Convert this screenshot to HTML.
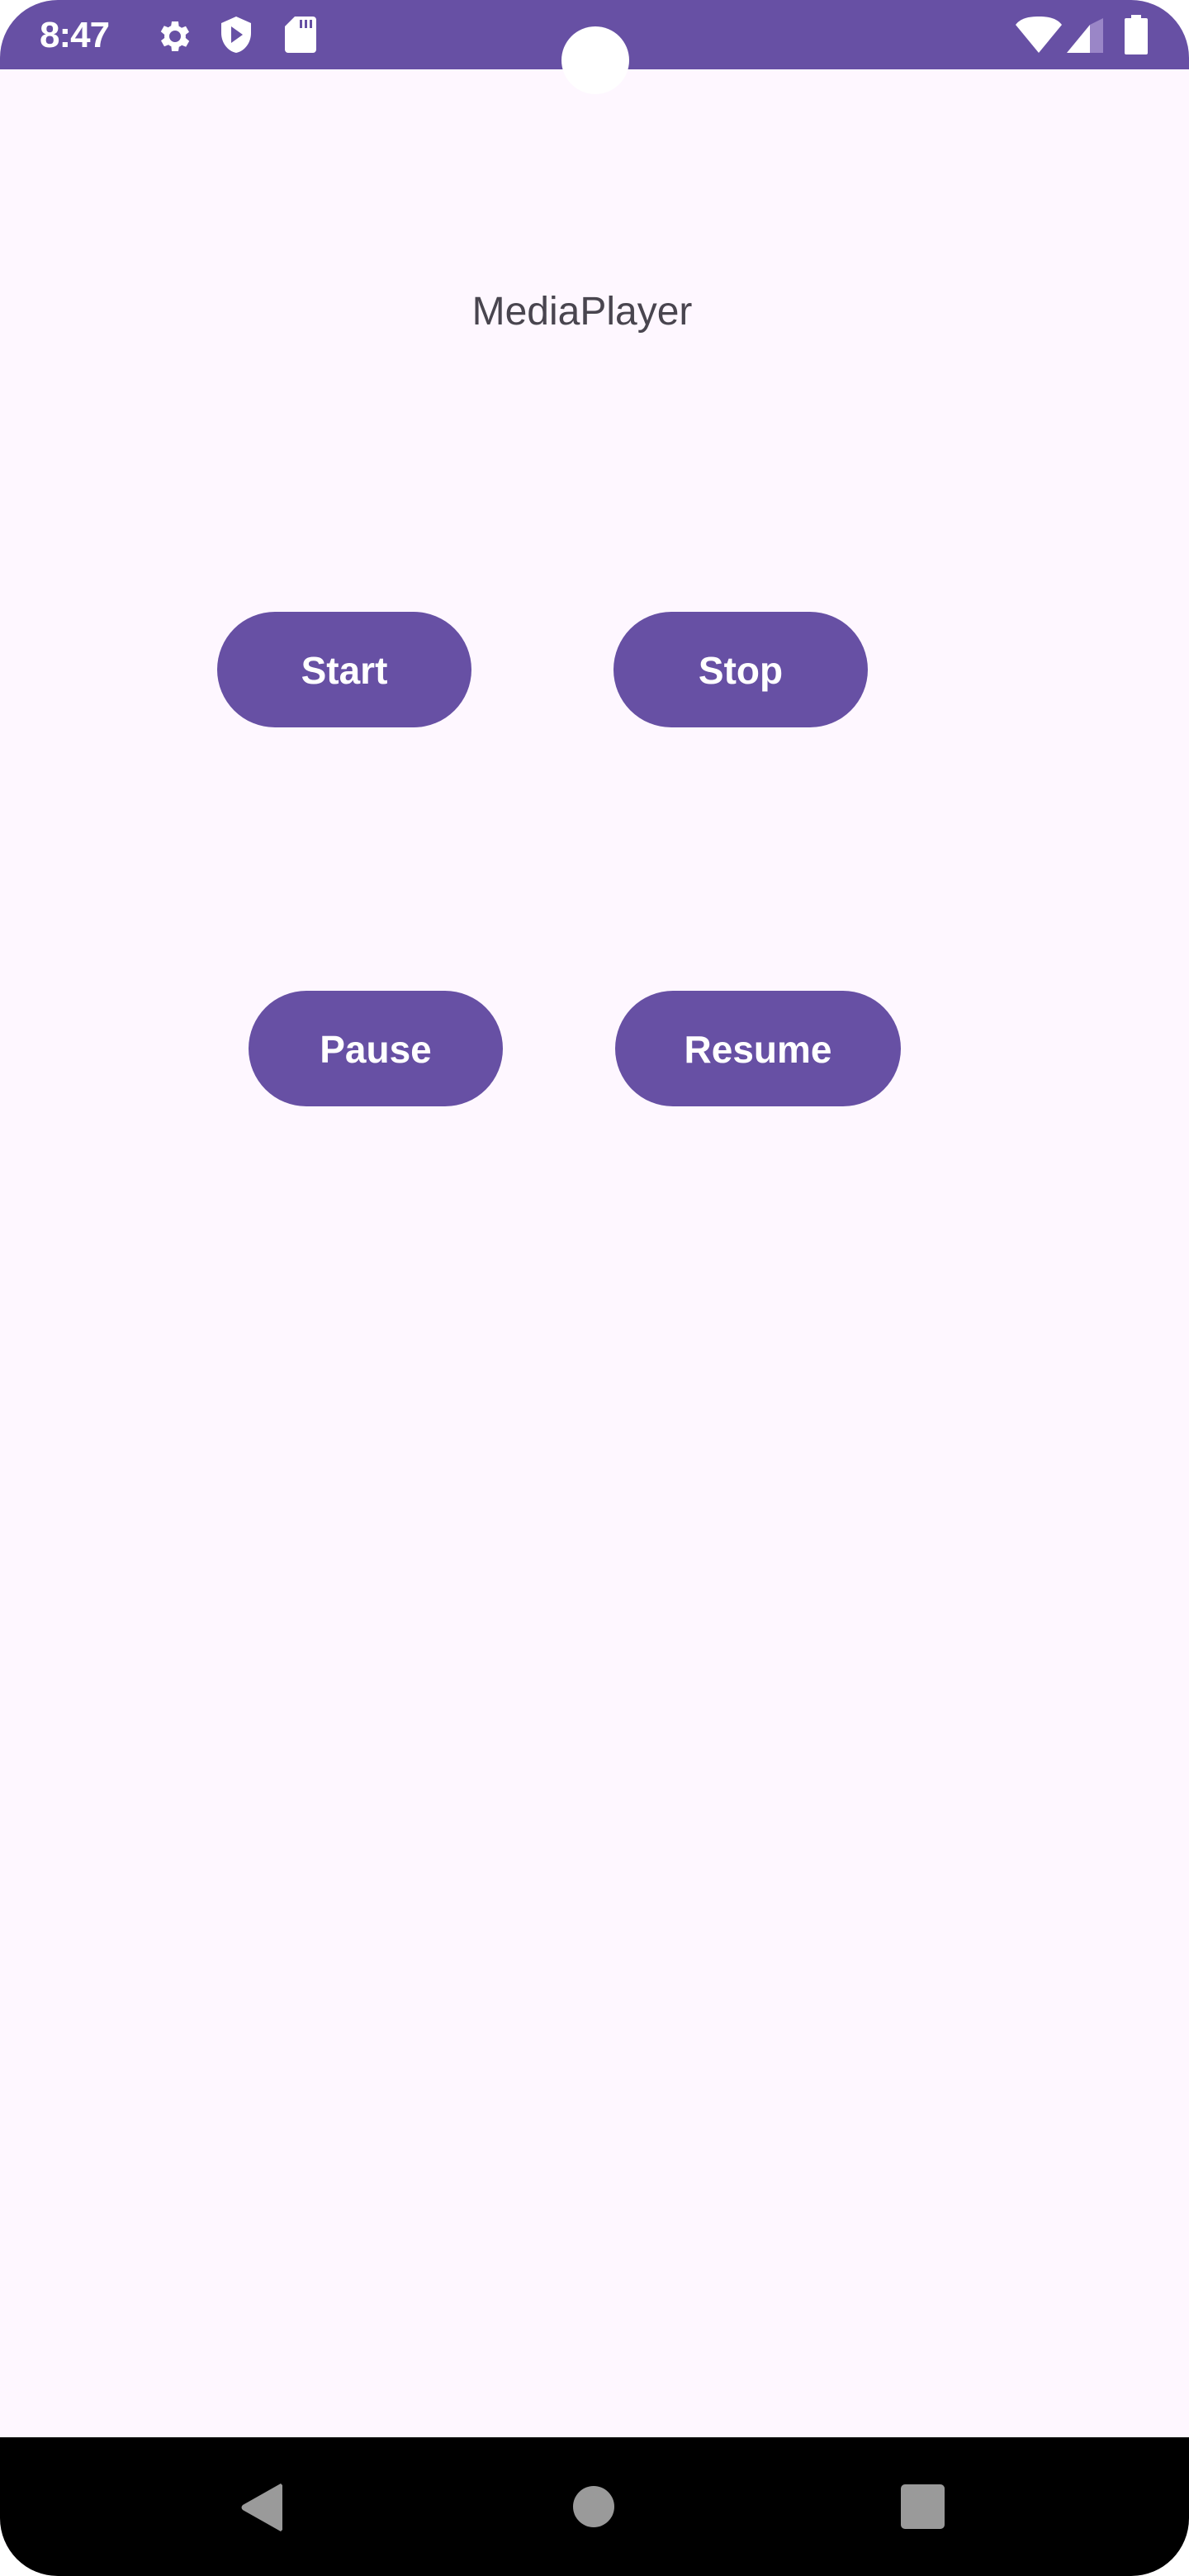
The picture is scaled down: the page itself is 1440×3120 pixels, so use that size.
<!DOCTYPE html>
<html><head><meta charset="utf-8"><style>
html,body{margin:0;padding:0;background:#fff;}
body{width:1440px;height:3120px;position:relative;overflow:hidden;font-family:"Liberation Sans",Roboto,sans-serif;}
.screen{position:absolute;left:0;top:0;width:1440px;height:3120px;background:#FEF7FF;border-radius:70px;overflow:hidden;}
.status{position:absolute;left:0;top:0;width:1440px;height:84px;background:#6750A4;}
.cam{position:absolute;left:680px;top:32px;width:82px;height:82px;border-radius:50%;background:#fff;}
.time{position:absolute;left:48px;top:18px;color:#fff;font-size:44px;font-weight:bold;letter-spacing:-1px;}
.title{position:absolute;left:0;width:1410px;top:350px;text-align:center;font-size:48px;color:#49454F;}
.btn{position:absolute;height:140px;border-radius:70px;background:#6750A4;color:#fff;font-size:46px;font-weight:bold;display:flex;align-items:center;justify-content:center;padding-top:2px;box-sizing:border-box;}
.nav{position:absolute;left:0;top:2952px;width:1440px;height:168px;background:#000;}
</style></head><body>
<div class="screen">
<div class="status">
<div class="time">8:47</div>
<svg style="position:absolute;left:186px;top:20px" width="48" height="48" viewBox="0 0 24 24"><path fill="#fff" d="M19.4 13a7.5 7.5 0 000-2l2.1-1.6-2-3.5-2.5 1a7 7 0 00-1.700-1L15 3h-4l-.4 2.6a7 7 0 00-1.7 1l-2.5-1-2 3.5L6.6 11a7.5 7.5 0 000 2l-2.1 1.6 2 3.5 2.5-1a7 7 0 001.7 1L11 21h4l.4-2.6a7 7 0 001.7-1l2.5 1 2-3.5zM13 15.5a3.5 3.5 0 110-7 3.5 3.5 0 010 7z"/></svg>
<svg style="position:absolute;left:264px;top:18px" width="44" height="48" viewBox="0 0 22 24"><path fill="#fff" d="M11 1L2 5v6c0 6 4 11 9 12 5-1 9-6 9-12V5z"/><path fill="#6750A4" d="M8 7v10l7-5z"/></svg>
<svg style="position:absolute;left:345px;top:20px" width="38" height="44" viewBox="0 0 19 22"><path fill="#fff" d="M6 0h11a2 2 0 012 2v18a2 2 0 01-2 2H2a2 2 0 01-2-2V6z"/><path fill="#6750A4" d="M9 2h1.5v5H9zM12 2h1.5v5H12zM15 2h1.5v5H15z"/></svg>
<svg style="position:absolute;left:1230px;top:20px" width="56" height="44" viewBox="0 0 28 22"><path fill="#fff" d="M14 22L0 5C3 1 8 0 14 0s11 1 14 5z"/></svg>
<svg style="position:absolute;left:1292px;top:22px" width="44" height="42" viewBox="0 0 22 21"><path fill="#fff" d="M0 21L14 4v17z"/><path fill="#9a86c7" d="M14 4L22 0v21h-8z"/></svg>
<svg style="position:absolute;left:1362px;top:18px" width="28" height="48" viewBox="0 0 14 24"><path fill="#fff" d="M4 0h6v2h3a1 1 0 011 1v20a1 1 0 01-1 1H1a1 1 0 01-1-1V3a1 1 0 011-1h3z"/></svg>
</div>
<div class="cam"></div>
<div class="title">MediaPlayer</div>
<div class="btn" style="left:263px;top:741px;width:308px;">Start</div>
<div class="btn" style="left:743px;top:741px;width:308px;">Stop</div>
<div class="btn" style="left:301px;top:1200px;width:308px;">Pause</div>
<div class="btn" style="left:745px;top:1200px;width:346px;">Resume</div>
<div class="nav">
<svg style="position:absolute;left:290px;top:56px" width="54" height="58" viewBox="0 0 54 58"><path fill="#9a9a9a" d="M50 0 L52 2 V56 L50 58 L4 32 Q1 29 4 26 Z"/></svg>
<div style="position:absolute;left:694px;top:59px;width:50px;height:50px;border-radius:50%;background:#9a9a9a"></div>
<div style="position:absolute;left:1091px;top:57px;width:53px;height:54px;border-radius:5px;background:#9a9a9a"></div>
</div>
</div>
</body></html>
